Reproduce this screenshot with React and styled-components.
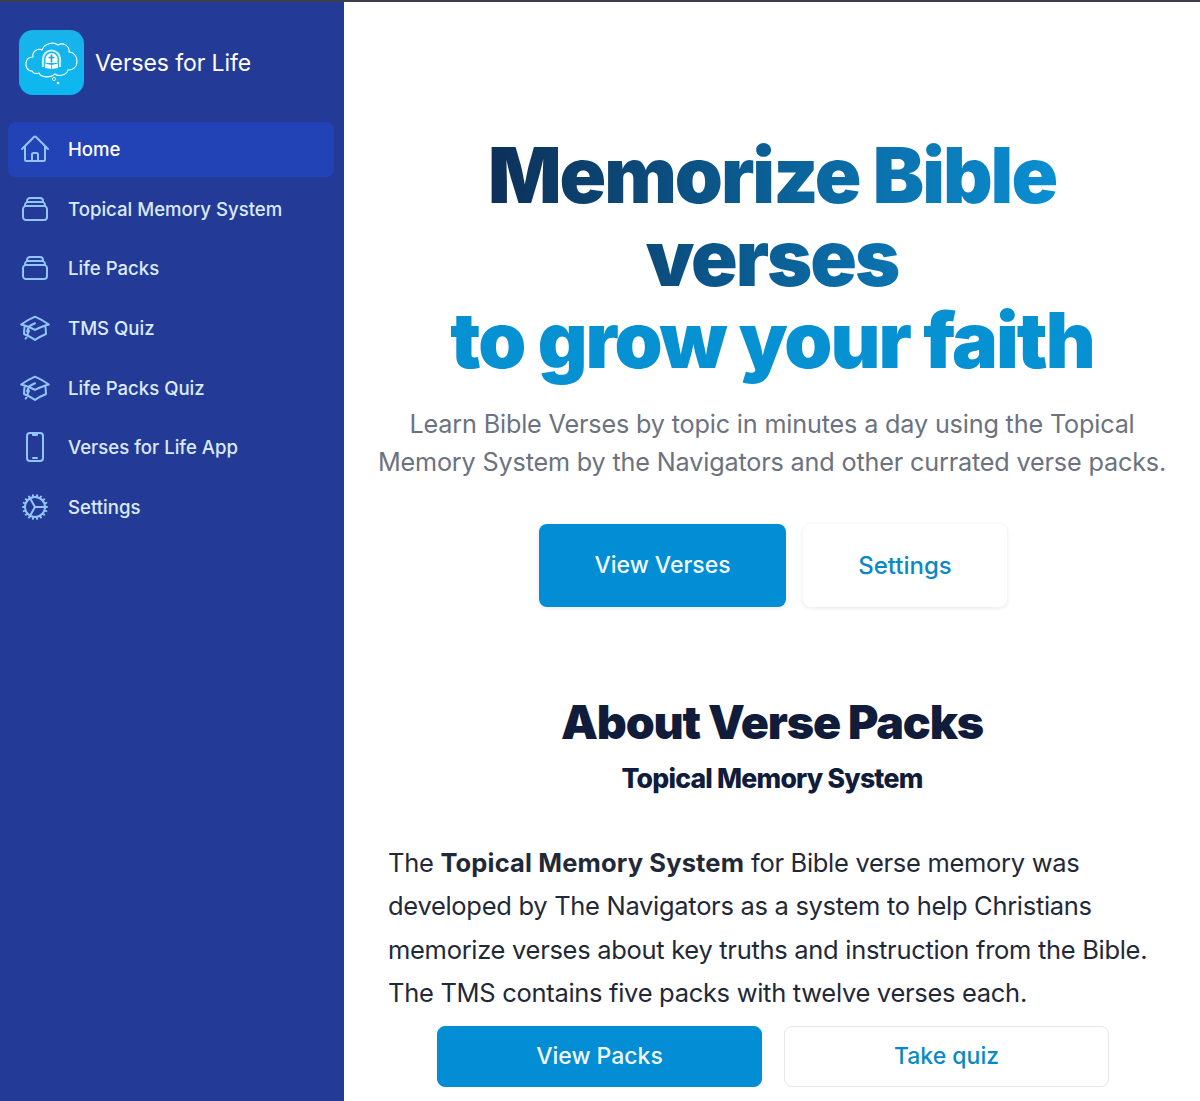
import styled, { createGlobalStyle } from "styled-components";
import {
  HiOutlineHome,
  HiOutlineRectangleStack,
  HiOutlineAcademicCap,
  HiOutlineDevicePhoneMobile,
  HiOutlineCog,
} from "react-icons/hi2";

const GlobalStyle = createGlobalStyle`
  * { box-sizing: border-box; }
  html, body { margin: 0; height: 100%; overflow: hidden; background: #fff; }
  body { font-family: Inter, "Liberation Sans", sans-serif; }
`;

const navItems = [
  { label: "Home", icon: HiOutlineHome, active: true },
  { label: "Topical Memory System", icon: HiOutlineRectangleStack },
  { label: "Life Packs", icon: HiOutlineRectangleStack },
  { label: "TMS Quiz", icon: HiOutlineAcademicCap },
  { label: "Life Packs Quiz", icon: HiOutlineAcademicCap },
  { label: "Verses for Life App", icon: HiOutlineDevicePhoneMobile },
  { label: "Settings", icon: HiOutlineCog },
];

const Logo = () => (
  <LogoBox>
    <svg width="65" height="65" viewBox="0 0 65 65" fill="none">
      <path
        d="M13 41C8 41 6.500 36 7 33C7.500 29 10 27 14 27C13 21 19 18 23 20C25 14 34 11 39 15C44 12 51 16 50 22C55 22 58 27 58 31C58 37 54 40 49 40C48 45 40 47 36 44C32 48 22 48 20 43C17 44 14 43 13 41Z"
        stroke="#fff"
        strokeWidth="1.100"
      />
      <circle cx="35" cy="49" r="1.600" stroke="#fff" strokeWidth=".9" />
      <circle cx="39" cy="53" r="1.300" fill="#fff" />
      <path d="M24 37V29a8.500 8.500 0 0 1 17 0v8" stroke="#c8eefb" strokeWidth="2.200" />
      <path d="M26.500 33V29a6 6 0 0 1 12 0v4z" fill="#fff" />
      <path d="M32.500 24.500v8M29.500 27.500h6" stroke="#1fa4d8" strokeWidth="1.700" />
      <path d="M26 33.500l6.500 1.500 6.500-1.500v4.500l-6.500 1-6.500-1z" fill="#fff" />
      <path d="M32.500 35v4" stroke="#1fa4d8" strokeWidth=".7" />
    </svg>
  </LogoBox>
);

const App = () => {
  return (
    <>
      <GlobalStyle />
      <Page>
        <Sidebar>
          <Brand>
            <Logo />
            <BrandName>Verses for Life</BrandName>
          </Brand>
          <Nav>
            {navItems.map(({ label, icon: Icon, active }) => (
              <NavItem key={label} $active={active}>
                <Icon size={32} />
                <span>{label}</span>
              </NavItem>
            ))}
          </Nav>
        </Sidebar>
        <Main>
          <Title>
            <TitleGradient>Memorize Bible verses</TitleGradient>
            <TitleBlue>to grow your faith</TitleBlue>
          </Title>
          <Lead>
            Learn Bible Verses by topic in minutes a day using the Topical
            Memory System by the Navigators and other currated verse packs.
          </Lead>
          <HeroActions>
            <HeroButton $primary $width={247}>View Verses</HeroButton>
            <HeroButton $width={204}>Settings</HeroButton>
          </HeroActions>
          <SectionTitle>About Verse Packs</SectionTitle>
          <SectionSub>Topical Memory System</SectionSub>
          <Body>
            The <strong>Topical Memory System</strong> for Bible verse memory
            was developed by The Navigators as a system to help Christians
            memorize verses about key truths and instruction from the Bible.
            The TMS contains five packs with twelve verses each.
          </Body>
          <PackActions>
            <PackButton $primary>View Packs</PackButton>
            <PackButton>Take quiz</PackButton>
          </PackActions>
        </Main>
      </Page>
    </>
  );
};

const Page = styled.div`
  display: flex;
  height: 100vh;
  border-top: 2px solid #3b3f48;
  overflow: hidden;
`;

const Sidebar = styled.aside`
  flex: 0 0 344px;
  background: #233b97;
  padding: 28px 10px 0 8px;
`;

const Brand = styled.div`
  display: flex;
  align-items: center;
  gap: 11px;
  padding-left: 11px;
  margin-bottom: 27px;
`;

const LogoBox = styled.div`
  width: 65px;
  height: 65px;
  border-radius: 14px;
  background: linear-gradient(180deg, #19b3ea, #0cb8f0);
  overflow: hidden;
`;

const BrandName = styled.div`
  font-size: 23px;
  font-weight: 400;
  letter-spacing: -0.1px;
  color: #fff;
`;

const Nav = styled.nav`
  display: flex;
  flex-direction: column;
  gap: 4.700px;
`;

const NavItem = styled.div`
  display: flex;
  align-items: center;
  gap: 17px;
  height: 55px;
  padding-left: 11px;
  padding-bottom: 1px;
  border-radius: 8px;
  background: ${(p) => (p.$active ? "#2243b6" : "transparent")};
  color: ${(p) => (p.$active ? "#fff" : "#dbeafe")};
  font-size: 18.600px;
  font-weight: 500;
  svg {
    flex: none;
    color: #93c5fd;
  }
`;

const Main = styled.main`
  flex: 1;
  display: flex;
  flex-direction: column;
  align-items: center;
  padding-top: 132px;
  min-width: 0;
`;

const Title = styled.h1`
  margin: 0;
  text-align: center;
  font-size: 77px;
  line-height: 82.500px;
  font-weight: 900;
  letter-spacing: -0.026em;
`;

const TitleGradient = styled.span`
  display: block;
  width: 580px;
  margin: 0 auto;
  background: linear-gradient(90deg, #0c2f57 0%, #0a90d4 100%);
  -webkit-background-clip: text;
  background-clip: text;
  color: transparent;
`;

const TitleBlue = styled.span`
  display: block;
  color: #0691d3;
`;

const Lead = styled.p`
  margin: 23px 0 0;
  width: 810px;
  text-align: center;
  font-size: 25.200px;
  letter-spacing: -0.16px;
  line-height: 38px;
  color: #6b7280;
`;

const HeroActions = styled.div`
  display: flex;
  gap: 17px;
  margin: 43px 0 0 2px;
`;

const HeroButton = styled.div`
  display: flex;
  align-items: center;
  justify-content: center;
  width: ${(p) => p.$width}px;
  height: 83px;
  border-radius: 8px;
  font-size: ${(p) => (p.$primary ? "23px" : "24px")};
  font-weight: 500;
  background: ${(p) => (p.$primary ? "#028dd4" : "#fff")};
  color: ${(p) => (p.$primary ? "#f0f9ff" : "#0a8ac4")};
  box-shadow: 0 1px 4px rgba(0, 0, 0, 0.1);
`;

const SectionTitle = styled.h2`
  margin: 84px 0 0;
  font-size: 46.500px;
  line-height: 62px;
  font-weight: 900;
  letter-spacing: -0.025em;
  color: #111c3a;
`;

const SectionSub = styled.h3`
  margin: 5px 0 0;
  font-size: 26.600px;
  line-height: 40px;
  font-weight: 800;
  letter-spacing: -0.03em;
  color: #111c3a;
`;

const Body = styled.p`
  margin: 43px 0 0;
  width: 768px;
  font-size: 25.500px;
  letter-spacing: -0.3px;
  line-height: 43.500px;
  color: #1f2937;
  strong {
    font-weight: 700;
    letter-spacing: 0.15px;
  }
`;

const PackActions = styled.div`
  display: flex;
  gap: 22px;
  margin: 11px 0 0 2px;
`;

const PackButton = styled.div`
  display: flex;
  align-items: center;
  justify-content: center;
  width: 325px;
  height: 61px;
  border-radius: 8px;
  font-size: 23px;
  font-weight: 500;
  background: ${(p) => (p.$primary ? "#028dd4" : "#fff")};
  color: ${(p) => (p.$primary ? "#f0f9ff" : "#0a8ac4")};
  border: 1px solid ${(p) => (p.$primary ? "#028dd4" : "#e5e7eb")};
`;

export default App;
